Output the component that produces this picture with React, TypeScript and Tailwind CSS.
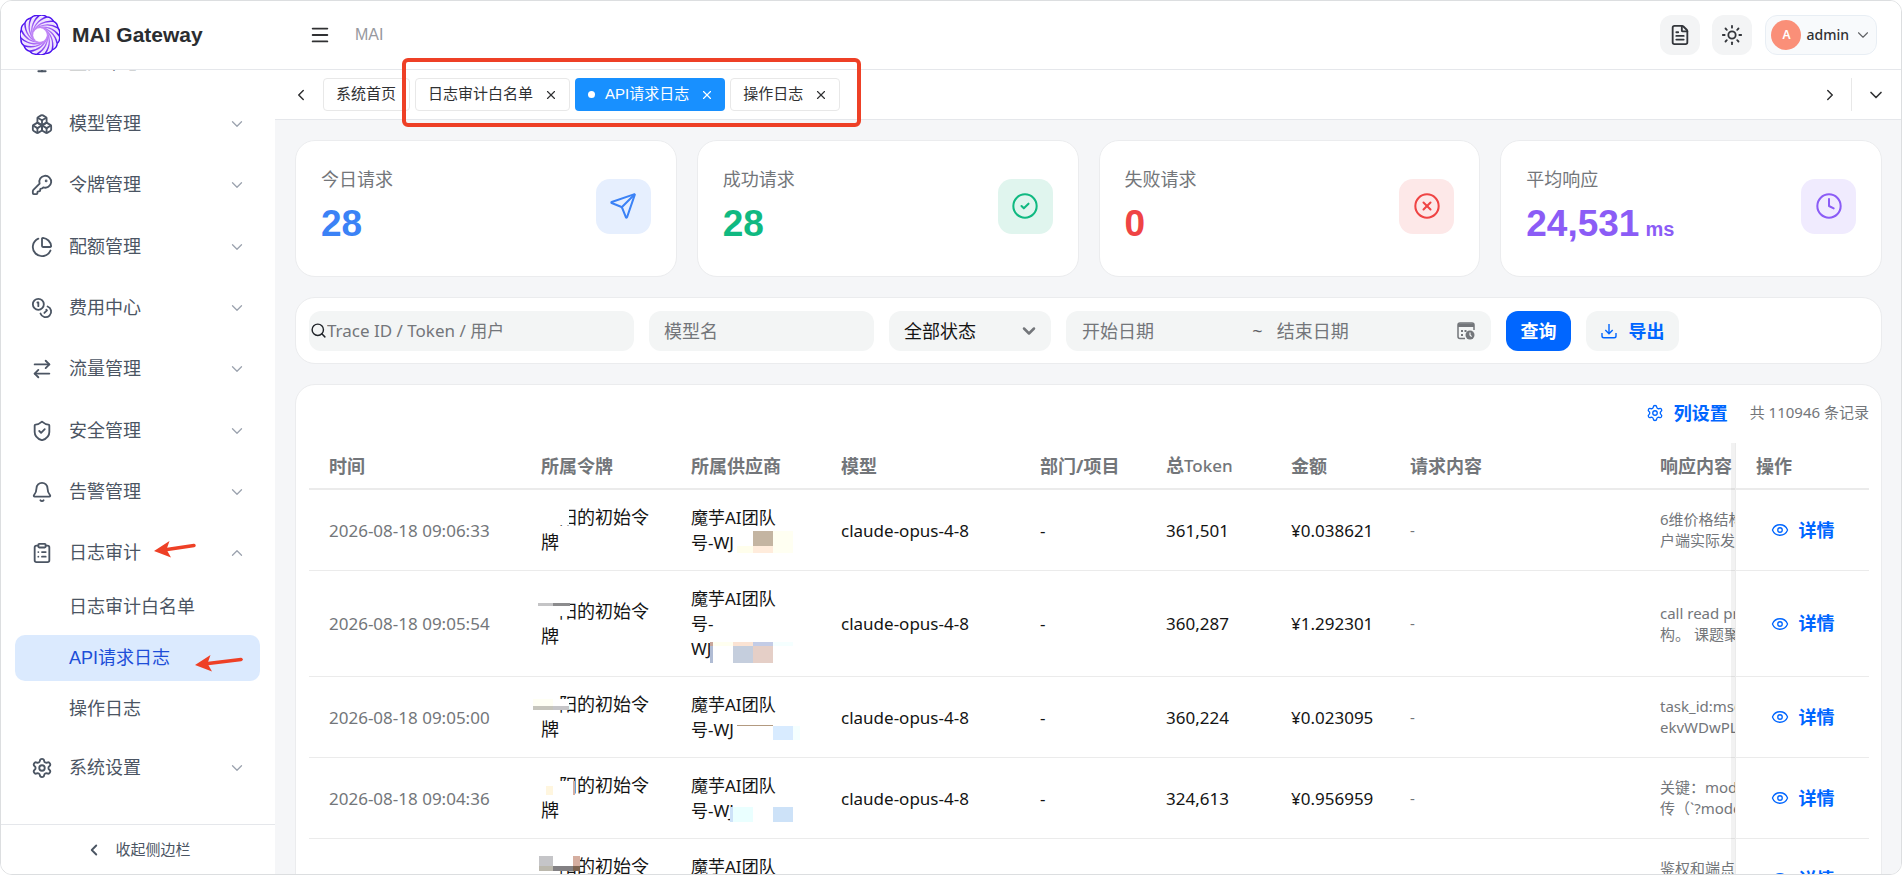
import React from "react"
import {
  ArrowRightLeft,
  Bell,
  Boxes,
  ChartPie,
  ChevronDown,
  ChevronLeft,
  ChevronRight,
  ChevronUp,
  CircleCheck,
  CircleX,
  ClipboardList,
  Clock,
  Coins,
  Eye,
  FileText,
  KeyRound,
  Menu,
  Monitor,
  Search,
  Send,
  Settings,
  ShieldCheck,
  Sun,
  X,
} from "lucide-react"

type Block = [number, number, number, number, string]

const menuItems = [
  { label: "监控中心", icon: Monitor },
  { label: "模型管理", icon: Boxes },
  { label: "令牌管理", icon: KeyRound },
  { label: "配额管理", icon: ChartPie },
  { label: "费用中心", icon: Coins },
  { label: "流量管理", icon: ArrowRightLeft },
  { label: "安全管理", icon: ShieldCheck },
  { label: "告警管理", icon: Bell },
  { label: "日志审计", icon: ClipboardList, open: true },
]

const subItems = ["日志审计白名单", "API请求日志", "操作日志"]

const tabs = [
  { label: "系统首页", fixed: true },
  { label: "日志审计白名单" },
  { label: "API请求日志", active: true },
  { label: "操作日志" },
]

const stats = [
  { label: "今日请求", value: "28", unit: "", icon: Send, text: "text-[#3b82f6]", box: "bg-[#e6effe]" },
  { label: "成功请求", value: "28", unit: "", icon: CircleCheck, text: "text-[#10b981]", box: "bg-[#e0f5ee]" },
  { label: "失败请求", value: "0", unit: "", icon: CircleX, text: "text-[#ef4444]", box: "bg-[#fde8e8]" },
  { label: "平均响应", value: "24,531", unit: "ms", icon: Clock, text: "text-[#8b5cf6]", box: "bg-[#f0ebfe]" },
]

const columns = [
  { title: "时间", width: "w-[212px]" },
  { title: "所属令牌", width: "w-[150px]" },
  { title: "所属供应商", width: "w-[150px]" },
  { title: "模型", width: "" },
  { title: "部门/项目", width: "w-[126px]" },
  { title: "总", latin: "Token", width: "w-[125px]" },
  { title: "金额", width: "w-[119px]" },
  { title: "请求内容", width: "w-[250px]" },
  { title: "响应内容", width: "w-[95px]" },
]

const rows: {
  time: string
  vendor: string[]
  tokens: string
  cost: string
  reply: string[]
  ownerMask: Block[]
  vendorMask: Block[]
}[] = [
  {
    time: "2026-08-18 09:06:33",
    vendor: ["魔芋AI团队", "号-WJ"],
    tokens: "361,501",
    cost: "¥0.038621",
    reply: ["6维价格结构", "户端实际发"],
    ownerMask: [[20, 18, 28, 17, "#fff"]],
    vendorMask: [
      [82, 41, 20, 15, "#c4b5a2"],
      [82, 56, 20, 7, "#ffecdc"],
      [102, 41, 20, 22, "#fffff2"],
      [66, 56, 16, 7, "#fffeec"],
    ],
  },
  {
    time: "2026-08-18 09:05:54",
    vendor: ["魔芋AI团队", "号-", "WJ"],
    tokens: "360,287",
    cost: "¥1.292301",
    reply: ["call read pri", "构。 课题聚"],
    ownerMask: [
      [20, 35, 29, 10, "#fff"],
      [17, 32, 15, 3, "#c4c4c6"],
      [32, 32, 17, 3, "#8c8c8e"],
    ],
    vendorMask: [
      [39, 71, 8, 21, "#fff"],
      [39, 71, 3, 21, "#b0bcd4"],
      [39, 71, 3, 4, "#c9a79b"],
      [42, 71, 20, 4, "#fffff0"],
      [62, 71, 20, 4, "#fbe3d3"],
      [62, 75, 20, 17, "#c5cedd"],
      [82, 71, 20, 4, "#c3cce6"],
      [82, 75, 20, 17, "#e5cfc7"],
      [102, 71, 20, 4, "#f5ffff"],
    ],
  },
  {
    time: "2026-08-18 09:05:00",
    vendor: ["魔芋AI团队", "号-WJ"],
    tokens: "360,224",
    cost: "¥0.023095",
    reply: ["task_id:msg", "ekvWDwPLW"],
    ownerMask: [
      [32, 22, 16, 7, "#fff"],
      [12, 22, 20, 7, "#fffff4"],
      [12, 29, 20, 4, "#c6c5bc"],
      [32, 29, 16, 4, "#c5c5c8"],
    ],
    vendorMask: [
      [66, 48, 36, 1, "#b39a80"],
      [102, 49, 20, 14, "#d8ebff"],
      [122, 49, 7, 14, "#f5ffff"],
    ],
  },
  {
    time: "2026-08-18 09:04:36",
    vendor: ["魔芋AI团队", "号-WJ"],
    tokens: "324,613",
    cost: "¥0.956959",
    reply: ["关键：mode", "传（`?mode"],
    ownerMask: [
      [25, 23, 27, 14, "#fff"],
      [25, 28, 7, 9, "#fff6df"],
      [52, 23, 2, 14, "#d5aea0"],
    ],
    vendorMask: [
      [59, 49, 3, 15, "#cde2f8"],
      [62, 49, 20, 15, "#eaffff"],
      [102, 49, 20, 15, "#cde2f8"],
    ],
  },
  {
    time: "2026-08-18 09:03:41",
    vendor: ["魔芋AI团队", "号-WJ"],
    tokens: "350,240",
    cost: "¥0.020056",
    reply: ["鉴权和端点", "全部通过"],
    ownerMask: [
      [18, 17, 14, 10, "#c5c5c8"],
      [32, 17, 20, 10, "#fff"],
      [52, 17, 7, 10, "#d5aea0"],
      [18, 27, 14, 5, "#bbb8ad"],
      [32, 27, 20, 5, "#828083"],
      [52, 27, 7, 5, "#7d6350"],
    ],
    vendorMask: [],
  },
]

function Logo() {
  const petals = Array.from({ length: 15 }, (_, i) => i * 24)
  return (
    <svg viewBox="0 0 40 40" className="size-10" fill="none" aria-hidden="true">
      <defs>
        <radialGradient id="logo" gradientUnits="userSpaceOnUse" cx="20" cy="20" r="20">
          <stop offset="0.35" stopColor="#c58cf7" />
          <stop offset="0.7" stopColor="#8f4cf3" />
          <stop offset="1" stopColor="#4a12f0" />
        </radialGradient>
      </defs>
      <circle cx="20" cy="20" r="13" stroke="#f0e4fe" strokeWidth="11" />
      {petals.map((angle) => (
        <path
          key={angle}
          transform={`rotate(${angle} 20 20)`}
          d="M12.500 20C13 12 18 5 26.600 2Q31 1.800 33.500 6.300"
          stroke="url(#logo)"
          strokeWidth="1.500"
        />
      ))}
    </svg>
  )
}

function Mask({ blocks }: { blocks: Block[] }) {
  return (
    <svg width="140" height="100" className="absolute left-0 top-0" aria-hidden="true">
      {blocks.map(([x, y, w, h, fill], i) => (
        <rect key={i} x={x} y={y} width={w} height={h} fill={fill} />
      ))}
    </svg>
  )
}

function Arrow({ tail, className }: { tail: number; className: string }) {
  return (
    <svg viewBox="0 0 50 20" className={`absolute h-5 w-[50px] ${className}`} aria-hidden="true">
      <path d={`M14 10.500L${tail} 6.500`} stroke="#ee4026" strokeWidth="3.500" strokeLinecap="round" />
      <path d="M1 12L16.500 2L13.500 10.500L18 18.500Z" fill="#ee4026" />
    </svg>
  )
}

function Header() {
  return (
    <header className="flex h-[69px] shrink-0 items-center border-b border-[#e5e7eb] bg-white pl-[19px] pr-6">
      <Logo />
      <h1 className="ml-3 w-[237px] text-[21px] font-bold text-[#2b2d30]">MAI Gateway</h1>
      <button type="button" aria-label="菜单">
        <Menu size={22} strokeWidth={2} className="text-[#303133]" />
      </button>
      <span className="ml-6 text-base text-[#97999e]">MAI</span>
      <div className="ml-auto flex items-center gap-3">
        <button type="button" aria-label="文档" className="flex size-10 items-center justify-center rounded-xl bg-[#f3f4f5]">
          <FileText size={22} className="text-[#33363b]" />
        </button>
        <button type="button" aria-label="主题" className="flex size-10 items-center justify-center rounded-xl bg-[#f3f4f5]">
          <Sun size={22} className="text-[#33363b]" />
        </button>
        <button
          type="button"
          className="ml-px flex h-10 items-center rounded-xl border border-[#e8eef4] bg-[#f8fafc] pl-[5px] pr-1 font-['Noto_Sans','Noto_Sans_CJK_SC',sans-serif]"
        >
          <span className="flex size-[30px] items-center justify-center rounded-full bg-[#fa8f78] text-xs font-semibold text-white">
            A
          </span>
          <span className="mx-[5px] text-sm font-medium text-[#303133]">admin</span>
          <ChevronDown size={18} strokeWidth={1.5} className="text-[#606266]" />
        </button>
      </div>
    </header>
  )
}

function Sidebar() {
  return (
    <aside className="flex w-[274px] shrink-0 flex-col bg-white text-lg text-[#4b5563]">
      <nav className="relative min-h-0 flex-1 overflow-hidden pl-3.5 pr-[15px]">
        <ul className="-mt-[38px] grid h-[552px] auto-rows-fr">
          {menuItems.map(({ label, icon: Icon, open }) => (
            <li key={label} className="flex">
              <button type="button" className="flex flex-1 items-center pl-4 pr-3.5 text-left">
                <Icon size={22} className="mr-4" />
                {label}
                {open ? (
                  <ChevronUp size={18} strokeWidth={1.75} className="ml-auto text-[#9ca3af]" />
                ) : (
                  <ChevronDown size={18} strokeWidth={1.75} className="ml-auto text-[#9ca3af]" />
                )}
              </button>
            </li>
          ))}
        </ul>
        <ul className="mb-[5px] space-y-[5px]">
          {subItems.map((label) => (
            <li key={label}>
              <a
                href="#"
                className={
                  label === "API请求日志"
                    ? "flex h-[46px] items-center rounded-[10px] bg-[#dbeafe] pl-[54px] text-[#1d4ed8]"
                    : "flex h-[46px] items-center rounded-[10px] pl-[54px]"
                }
              >
                {label}
              </a>
            </li>
          ))}
        </ul>
        <button type="button" className="flex h-[61px] w-full items-center pl-4 pr-3.5 text-left">
          <Settings size={22} className="mr-4" />
          系统设置
          <ChevronDown size={18} strokeWidth={1.75} className="ml-auto text-[#9ca3af]" />
        </button>
        <Arrow tail={41} className="left-[152px] top-[469px]" />
        <Arrow tail={47} className="left-[193px] top-[583px]" />
      </nav>
      <button
        type="button"
        className="flex h-[50px] shrink-0 items-center justify-center gap-3 border-t border-[#e5e7eb] text-[15px]"
      >
        <ChevronLeft size={18} strokeWidth={2.5} />
        收起侧边栏
      </button>
    </aside>
  )
}

function TabBar() {
  return (
    <div className="relative flex h-[50px] shrink-0 items-center border-b border-[#e5e7eb] bg-white pl-[17px] pr-[15px] text-[#303133]">
      <button type="button" aria-label="向左">
        <ChevronLeft size={18} />
      </button>
      <div className="ml-[13px] flex gap-[5px] text-[15px]">
        {tabs.map(({ label, fixed, active }) => (
          <div
            key={label}
            className={
              active
                ? "flex h-[33px] items-center rounded bg-[#1890ff] pl-[13px] pr-[11px] text-white"
                : fixed
                  ? "flex h-[33px] items-center rounded border border-[#e8e8e8] bg-white pl-3 pr-[13px]"
                  : "flex h-[33px] items-center rounded border border-[#e8e8e8] bg-white pl-3 pr-[11px]"
            }
          >
            {active && <span className="mr-2.5 size-[7px] rounded-full bg-white" />}
            <a href="#">{label}</a>
            {!fixed && (
              <button type="button" aria-label={`关闭${label}`} className="ml-[11px]">
                <X size={14} strokeWidth={2} />
              </button>
            )}
          </div>
        ))}
      </div>
      <div className="ml-auto flex items-center">
        <button type="button" aria-label="向右" className="mr-3">
          <ChevronRight size={18} />
        </button>
        <span className="h-[33px] w-px bg-[#e8e8e8]" />
        <button type="button" aria-label="更多" className="ml-3.5">
          <ChevronDown size={20} />
        </button>
      </div>
      <div className="pointer-events-none absolute -top-3 left-[127px] z-10 h-[69px] w-[459px] rounded-md border-4 border-[#ee4026]" />
    </div>
  )
}

function StatCards() {
  return (
    <div className="grid shrink-0 grid-cols-4 gap-5">
      {stats.map(({ label, value, unit, icon: Icon, text, box }) => (
        <div
          key={label}
          className="flex h-[137px] items-center justify-between rounded-[20px] border border-[#ebecee] bg-white px-[25px] pb-[5px]"
        >
          <div>
            <p className="text-lg leading-7 text-[#73767a]">{label}</p>
            <p className={`mt-[7px] text-[37px] font-bold leading-[46px] ${text}`}>
              {value}
              {unit && <span className="ml-1.5 text-xl">{unit}</span>}
            </p>
          </div>
          <span className={`flex size-[55px] items-center justify-center rounded-[14px] ${box} ${text}`}>
            <Icon size={28} strokeWidth={1.75} />
          </span>
        </div>
      ))}
    </div>
  )
}

function Filters() {
  return (
    <form className="flex h-[67px] shrink-0 items-center gap-[15px] rounded-[20px] border border-[#ebecee] bg-white px-[13px] text-[17px] font-['Noto_Sans','Noto_Sans_CJK_SC',sans-serif]">
      <label className="flex h-10 w-[325px] items-center rounded-xl bg-[#f3f5f5] pl-px">
        <Search size={17} strokeWidth={2} className="shrink-0 text-[#1f2329]" />
        <input
          aria-label="搜索"
          placeholder="Trace ID / Token / 用户"
          className="min-w-0 flex-1 outline-none placeholder:text-[#73767a]"
        />
      </label>
      <input
        aria-label="模型名"
        placeholder="模型名"
        className="h-10 w-[225px] rounded-xl bg-[#f3f5f5] px-[15px] text-lg outline-none placeholder:text-[#73767a]"
      />
      <div className="relative">
        <select aria-label="状态" className="h-10 w-[162px] appearance-none rounded-xl bg-[#f3f5f5] px-[15px] text-lg text-[#141414]">
          <option>全部状态</option>
        </select>
        <ChevronDown size={20} strokeWidth={3} className="pointer-events-none absolute right-3 top-2.5 text-[#73767a]" />
      </div>
      <div className="flex h-10 w-[425px] items-center rounded-xl bg-[#f3f5f5] px-4 text-lg">
        <input aria-label="开始日期" placeholder="开始日期" className="min-w-0 flex-1 outline-none placeholder:text-[#73767a]" />
        <span className="pl-1.5 pr-3.5 text-[#606266]">~</span>
        <input aria-label="结束日期" placeholder="结束日期" className="min-w-0 flex-1 outline-none placeholder:text-[#73767a]" />
        <svg viewBox="0 0 18 18" className="ml-4 size-[18px]" fill="none" aria-hidden="true">
          <path d="M8 16.500H3Q1 16.500 1 14.500V3Q1 1 3 1H15Q17 1 17 3V8" stroke="#73767a" strokeWidth="1.500" />
          <path d="M1 1.500h16V5H1Z" fill="#73767a" />
          <path d="M4 8h2v2H4ZM7.500 8h2v2h-2ZM4 12h2v2H4Z" fill="#73767a" />
          <circle cx="13" cy="13" r="4.500" fill="#73767a" />
          <path d="M13 10.500V13l1.600 1.600" stroke="#f3f5f5" strokeWidth="1.200" />
        </svg>
      </div>
      <button type="button" className="h-10 w-[65px] rounded-xl bg-[#0066ff] text-lg font-bold text-white">
        查询
      </button>
      <button type="button" className="flex h-10 w-[93px] items-center justify-center gap-3 rounded-xl bg-[#f3f5f5] text-lg font-bold text-[#0066ff]">
        <svg viewBox="0 0 16 16" className="size-4" fill="none" stroke="currentColor" strokeWidth="1.400" aria-hidden="true">
          <path d="M8 1v9.500M4.300 7L8 10.700L11.700 7M1 10v3q0 1.800 1.800 1.800h10.400Q15 14.800 15 13v-3" />
        </svg>
        导出
      </button>
    </form>
  )
}

function LogTable() {
  return (
    <section className="rounded-[20px] border border-[#ebecee] bg-white pl-[13px] pr-3 font-['Noto_Sans','Noto_Sans_CJK_SC',sans-serif]">
      <div className="flex h-[58px] items-center justify-end pb-[3px]">
        <button type="button" className="flex items-center gap-2.5 text-lg font-bold text-[#0066ff]">
          <Settings size={18} strokeWidth={1.75} />
          列设置
        </button>
        <span className="ml-[22px] text-[15px] text-[#73767a]">共 110946 条记录</span>
      </div>
      <table className="w-full table-fixed border-separate border-spacing-0 text-left text-[17px] leading-[25px] text-[#141414]">
        <thead className="text-lg text-[#73767a]">
          <tr className="h-[47px]">
            {columns.map(({ title, latin, width }) => (
              <th key={title} className={`whitespace-nowrap border-b-2 border-[#ebebeb] pl-5 ${width}`}>
                {title}
                {latin && <span className="text-[17px] font-medium">{latin}</span>}
              </th>
            ))}
            <th className="relative w-[134px] border-b-2 border-l border-[#ebebeb] pl-5">
              <span className="absolute -bottom-0.5 -left-[5px] top-0 w-1 bg-black/5" />
              操作
            </th>
          </tr>
        </thead>
        <tbody className="[&_td]:border-b [&_td]:border-[#ebebeb] [&_td]:py-[15px] [&_td]:pl-5">
          {rows.map((row) => (
            <tr key={row.time}>
              <td className="text-[#73767a]">{row.time}</td>
              <td className="relative text-lg leading-[25px]">
                {"\u3000阳的初始令"}
                <br />牌
                <Mask blocks={row.ownerMask} />
              </td>
              <td className="relative">
                {row.vendor.map((line) => (
                  <div key={line}>{line}</div>
                ))}
                <Mask blocks={row.vendorMask} />
              </td>
              <td>claude-opus-4-8</td>
              <td>-</td>
              <td>{row.tokens}</td>
              <td>{row.cost}</td>
              <td className="text-[15px] text-[#73767a]">-</td>
              <td className="overflow-hidden whitespace-nowrap text-[15px] leading-[21px] text-[#73767a]">
                {row.reply.map((line) => (
                  <div key={line}>{line}</div>
                ))}
              </td>
              <td className="relative border-l pr-5">
                <span className="absolute -bottom-px -left-[5px] top-0 w-1 bg-black/5" />
                <button type="button" className="mx-auto flex items-center gap-2.5 text-lg font-bold leading-[25px] text-[#0066ff]">
                  <Eye size={18} strokeWidth={1.75} />
                  详情
                </button>
              </td>
            </tr>
          ))}
        </tbody>
      </table>
    </section>
  )
}

function App() {
  return (
    <div className="flex h-screen flex-col overflow-hidden rounded-xl border border-[#dcdee0] bg-white font-['Liberation_Sans','Noto_Sans_CJK_SC',sans-serif]">
      <Header />
      <div className="flex min-h-0 flex-1">
        <Sidebar />
        <div className="flex min-w-0 flex-1 flex-col">
          <TabBar />
          <main className="flex min-h-0 flex-1 flex-col gap-5 overflow-hidden bg-[#f5f6f8] pl-5 pr-[19px] pt-5">
            <StatCards />
            <Filters />
            <LogTable />
          </main>
        </div>
      </div>
    </div>
  )
}

export default App
